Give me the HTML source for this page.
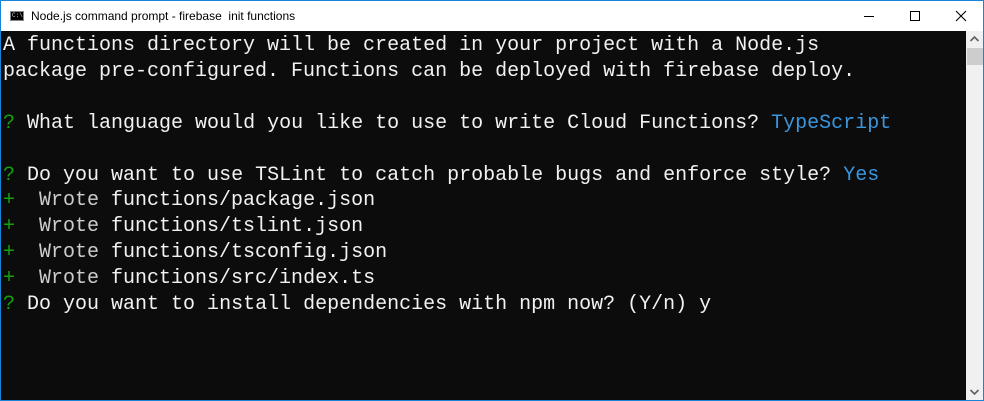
<!DOCTYPE html>
<html><head><style>
html,body{margin:0;padding:0;width:984px;height:401px;overflow:hidden;background:#fff;}
.win{position:absolute;left:0;top:0;width:982px;height:399px;border:1px solid #1883d7;background:#0c0c0c;}
.title{position:absolute;left:0;top:0;width:982px;height:30px;background:#fff;font-family:"Liberation Sans",sans-serif;font-size:12px;color:#000;}
.title .t{position:absolute;left:30px;top:8px;}
.icon{position:absolute;left:9px;top:10px;width:14px;height:10px;background:#000;border:1px solid #888;box-sizing:border-box;}
.icon span{position:absolute;left:1px;top:1px;font-size:6px;color:#ccc;font-family:"Liberation Mono",monospace;line-height:6px;}
.term{position:absolute;left:0;top:30px;width:965px;height:369px;background:#0c0c0c;}
pre{margin:0;padding:2px 0 0 2px;font-family:"Liberation Mono",monospace;font-size:20px;line-height:25.9px;color:#cccccc;}
.g{color:#13a10e}.b{color:#3a96dd}.w{color:#f2f2f2}
.sb{position:absolute;left:965px;top:30px;width:17px;height:369px;background:#f0f0f0;}
.thumb{position:absolute;left:1px;top:17px;width:16px;height:17px;background:#cdcdcd;}
</style></head><body>
<div class="win">
<div class="title">
<div class="icon"><span>C:\</span></div>
<div class="t">Node.js command prompt - firebase&nbsp; init functions</div>
<svg style="position:absolute;left:0;top:0" width="982" height="30">
<line x1="863" y1="15.5" x2="873" y2="15.5" stroke="#000" stroke-width="1"/>
<rect x="909.5" y="10.5" width="9" height="9" fill="none" stroke="#000"/>
<path d="M955 10 L965 20 M965 10 L955 20" stroke="#000" stroke-width="1.1"/>
</svg>
</div>
<div class="term"><pre><span class="w">A functions directory will be created in your project with a Node.js
package pre-configured. Functions can be deployed with firebase deploy.</span>

<span class="g">?</span> <span class="w">What language would you like to use to write Cloud Functions?</span> <span class="b">TypeScript</span>

<span class="g">?</span> <span class="w">Do you want to use TSLint to catch probable bugs and enforce style?</span> <span class="b">Yes</span>
<span class="g">+</span>  Wrote <span class="w">functions/package.json</span>
<span class="g">+</span>  Wrote <span class="w">functions/tslint.json</span>
<span class="g">+</span>  Wrote <span class="w">functions/tsconfig.json</span>
<span class="g">+</span>  Wrote <span class="w">functions/src/index.ts</span>
<span class="g">?</span> <span class="w">Do you want to install dependencies with npm now? (Y/n) y</span></pre></div>
<div class="sb"><div class="thumb"></div>
<svg style="position:absolute;left:0;top:0" width="17" height="369">
<path d="M4.5 10 L8.5 6 L12.5 10" stroke="#606060" stroke-width="1.6" fill="none"/>
<path d="M4.5 359 L8.5 363 L12.5 359" stroke="#606060" stroke-width="1.6" fill="none"/>
</svg></div>
</div>
</body></html>
